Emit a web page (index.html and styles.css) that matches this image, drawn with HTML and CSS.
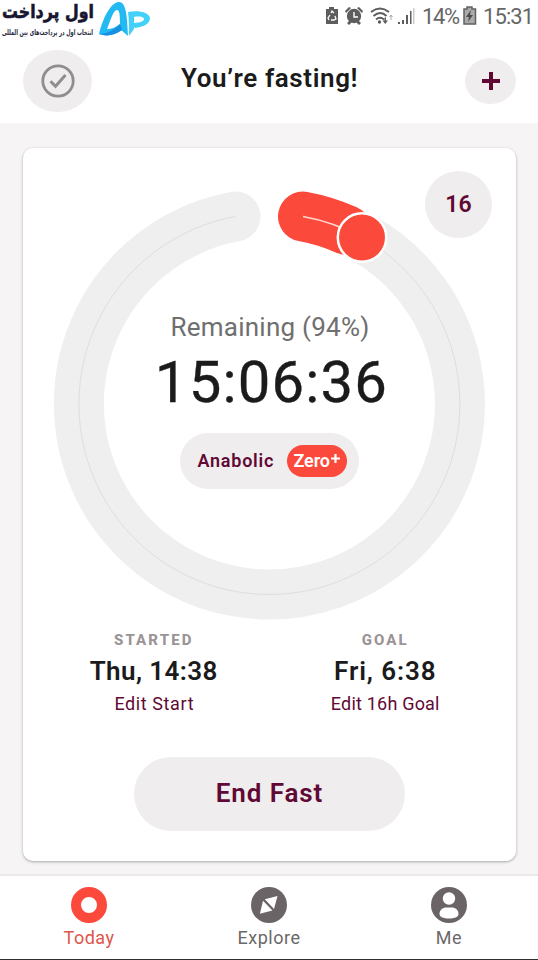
FILE: index.html
```html
<!DOCTYPE html>
<html lang="en">
<head>
<meta charset="utf-8">
<title>Fasting timer</title>
<link rel="stylesheet" href="styles.css">
</head>
<body>
<div class="app">
  <header class="header">
    <div class="statusbar">
      <svg class="brand" width="152" height="42" viewBox="0 0 152 42">
        <text class="brand-name" x="94" y="18" textLength="92" lengthAdjust="spacingAndGlyphs" direction="rtl">اول پرداخت</text>
        <text class="brand-tag" x="93" y="35" textLength="91" lengthAdjust="spacingAndGlyphs" direction="rtl">انتخاب اول در پرداخت‌های بین المللی</text>
        <path d="M99 34C103 18 110 4 118 2c8-1 9 12 10 34l-8-7c0-12 0-19-3-19-4 0-7 12-10 19 5 0 9-2 13-5l2 6c-7 5-15 7-23 4z" fill="#23b9f2"/>
        <path d="M99 34c8 0 15-4 21-10l2 6c-7 5-15 7-23 4z" fill="#198fe2"/>
        <path d="M128 12c12-2 21 1 22 6 0 6-7 9-15 10l-4-5c7 0 13-1 13-4 0-2-5-3-10-2v12l-5 7c0-9 0-17-1-24z" fill="#43d1fa"/>
      </svg>
      <div class="status-icons">
        <svg width="92" height="24" viewBox="0 0 92 24" fill="#5d5d5d">
          <path d="M4 2h5v2h4v15H1V4h3z"/>
          <path d="M4 15l-1-2 2-3M6 8l1-2 2 2M10 11l1 3-2 1H6" fill="none" stroke="#fff" stroke-width="1.3"/>
          <circle cx="29" cy="11" r="7.2"/>
          <path d="M20 6l4-4 2 1-5 5zM38 6l-4-4-2 1 5 5zM22 18l3-3 2 2-3 3zM36 18l-3-3-2 2 3 3z"/>
          <path d="M29 7v5h4" fill="none" stroke="#fff" stroke-width="1.4"/>
          <path d="M46 7q9-7 18 0M48.500 11q7-6 13 0M51 14.500q4-3.500 8 0" fill="none" stroke="#5d5d5d" stroke-width="1.900"/>
          <circle cx="54.500" cy="17" r="1.700"/>
          <path d="M57.500 15.500h2V12.500H61v3h2L60.200 19z"/>
          <path d="M66 10v5M64.500 12L66 10l1.500 2" fill="none" stroke="#aaa"/>
          <path d="M73 17h2v2h-2zM77 15h2v4h-2zM81 10h2v9h-2z"/>
          <path d="M85 6h1.500v13H85z"/>
          <path d="M88 3h1.500v16H88z" fill="#ccc"/>
        </svg>
        <span class="percent">14%</span>
        <svg class="battery" width="14" height="20" viewBox="0 0 14 20">
          <path d="M4 1h5v2h3.500v15H1V3h3z" fill="#aaa" stroke="#606060" stroke-width="1.500"/>
          <path d="M8 4l-5 7h3l-1 5 5-7H7z" fill="#4c4c4c"/>
        </svg>
        <span class="clock">15:31</span>
      </div>
    </div>
    <div class="titlebar">
      <div class="check-button">
        <svg width="34" height="34" viewBox="0 0 34 34" fill="none" stroke="#918c8e" stroke-width="2.800">
          <circle cx="17" cy="17" r="15.200"/><path d="M9.500 17.200l5 5L24.500 11" stroke-width="3"/>
        </svg>
      </div>
      <h1 class="title">You’re fasting!</h1>
      <div class="add-button">
        <svg width="18" height="18" viewBox="0 0 18 18"><path d="M9 0v18M0 9h18" stroke="#5f0934" stroke-width="4"/></svg>
      </div>
    </div>
  </header>

  <main class="main">
    <section class="card">
      <div class="dial">
        <svg class="ring" width="432" height="432" viewBox="0 0 432 432" fill="none">
          <path class="track" d="M308.500 49.200A190.500 190.500 0 1 1 182.500 28.500"/>
          <path class="guide" d="M308.500 49.200A190.500 190.500 0 1 1 182.500 28.500"/>
          <path class="progress" d="M250 28.500A190.500 190.500 0 0 1 293.500 42"/>
          <path class="progress-guide" d="M250 28.500A190.500 190.500 0 0 1 308.500 49.200"/>
          <circle cx="309" cy="49.500" r="24.200" fill="#fb4a3b" stroke="#fff" stroke-width="2.500"/>
        </svg>
        <div class="readout">
          <div class="remaining">Remaining (94%)</div>
          <div class="timer">15:06:36</div>
          <div class="zone"><span class="zone-name">Anabolic</span><span class="zero"><span class="zero-word">Zero</span><svg width="9" height="9" viewBox="0 0 9 9"><path d="M4.500 0v9M0 4.500h9" stroke="#fff" stroke-width="2.200"/></svg></span></div>
        </div>
      </div>
      <div class="goal-hours">16</div>
      <div class="times">
        <div class="time">
          <div class="label">STARTED</div>
          <div class="value">Thu, 14:38</div>
          <div class="edit edit-start">Edit Start</div>
        </div>
        <div class="time">
          <div class="label">GOAL</div>
          <div class="value goal-value">Fri, 6:38</div>
          <div class="edit">Edit 16h Goal</div>
        </div>
      </div>
      <div class="end-button">End Fast</div>
    </section>
  </main>

  <nav class="tabs">
    <div class="tab active">
      <svg width="36" height="36" viewBox="0 0 36 36"><circle cx="18" cy="18" r="13" fill="none" stroke="#fb4a3b" stroke-width="10"/></svg>
      <span>Today</span>
    </div>
    <div class="tab">
      <svg width="36" height="36" viewBox="0 0 36 36"><circle cx="18" cy="18" r="18" fill="#6b6466"/><path d="M26.500 9L13.800 12.200l9.200 9.800zM12 13.700L8.900 26.700l12.500-3.300z" fill="#fff"/></svg>
      <span>Explore</span>
    </div>
    <div class="tab">
      <svg width="36" height="36" viewBox="0 0 36 36"><circle cx="18" cy="18" r="18" fill="#6b6466"/><circle cx="18" cy="11.500" r="6.200" fill="#fff"/><path d="M8.500 27c0-4 3-6.500 7-6.500h5c4 0 7 2.500 7 6.500 0 3-4 4.500-9.500 4.500s-9.500-1.500-9.500-4.500z" fill="#fff"/></svg>
      <span>Me</span>
    </div>
  </nav>
</div>
</body>
</html>
```
FILE: styles.css
```css
* { box-sizing: border-box; }
body { margin: 0; font-family: Roboto, "Liberation Sans", sans-serif; background: #fff; }
.app { width: 538px; height: 960px; display: flex; flex-direction: column; overflow: hidden; border-bottom: 1px solid #303030; }
svg { display: block; flex: none; }

.header { height: 123px; background: #fff; }
.statusbar { height: 42px; display: flex; justify-content: space-between; }
.brand { overflow: visible; }
.brand-name { font: bold 19px "DejaVu Sans", sans-serif; fill: #17152f; stroke: #17152f; stroke-width: .6px; }
.brand-tag { font: bold 8px "DejaVu Sans", sans-serif; fill: #29273c; }
.status-icons { display: flex; align-items: flex-start; padding: 5px 7px 0 0; color: #666; font-size: 22px; line-height: 24px; }
.percent { width: 37px; margin-left: 5px; white-space: nowrap; letter-spacing: -1.4px; }
.battery { margin: 1px 6px 0 4px; }
.clock { width: 48px; letter-spacing: -.9px; }

.titlebar { height: 81px; display: flex; align-items: flex-start; justify-content: space-between; padding: 8px 22px 0 23px; }
.check-button { width: 69px; height: 62px; border-radius: 50%; background: #f0edee; display: flex; align-items: center; justify-content: center; }
.title { margin: 13px 0 0 17px; width: 178px; font-size: 26px; line-height: 30px; font-weight: 600; letter-spacing: .6px; white-space: nowrap; color: #1b1b1b; }
.add-button { width: 51px; height: 46px; margin: 8px 0 0 34px; border-radius: 50%; background: #f0edee; display: flex; align-items: center; justify-content: center; }

.main { height: 751px; background: #f6f4f5; padding: 25px 22px 0 23px; }
.card { position: relative; height: 713px; background: #fff; border-radius: 10px; box-shadow: 0 1px 3px rgba(0,0,0,.32); display: flex; flex-direction: column; align-items: center; padding-top: 40px; }
.dial { display: grid; width: 432px; height: 432px; margin-right: 1px; }
.ring, .readout { grid-area: 1 / 1; }
.track { stroke: #efefef; stroke-width: 50; stroke-linecap: round; }
.guide { stroke: #dedede; stroke-width: 1; }
.progress { stroke: #fb4a3b; stroke-width: 50; stroke-linecap: round; }
.progress-guide { stroke: #ffd9d4; stroke-width: 1.300; }
.readout { display: flex; flex-direction: column; align-items: center; padding-top: 123px; z-index: 1; }
.remaining { font-size: 26px; line-height: 32px; color: #6f6f6f; letter-spacing: .25px; padding-left: 2px; }
.timer { margin-top: 7px; font-size: 58px; line-height: 64px; letter-spacing: 1.2px; color: #1b1b1b; padding-left: 5px; -webkit-text-stroke: .35px #1b1b1b; }
.zone { margin-top: 19px; width: 179px; height: 56px; border-radius: 28px; background: #f0edee; display: flex; align-items: center; padding: 0 0 1px 18px; }
.zone-name { width: 77px; font-size: 18px; font-weight: 600; letter-spacing: .75px; color: #5f0934; }
.zero { margin-left: 12px; width: 60px; height: 32px; border-radius: 16px; background: #fb4a3b; color: #fff; display: flex; align-items: center; padding-left: 7px; }
.zero-word { width: 37px; font-size: 18px; font-weight: 600; letter-spacing: -.1px; }
.zero svg { margin-top: -5px; }
.goal-hours { position: absolute; top: 23px; right: 24px; width: 67px; height: 67px; border-radius: 50%; background: #f0edee; color: #5f0934; font-size: 23px; font-weight: 600; line-height: 67px; text-align: center; }

.times { display: flex; width: 463px; margin-top: 11px; }
.time { flex: 1; display: flex; flex-direction: column; align-items: center; }
.label { font-size: 15px; line-height: 18px; font-weight: 800; letter-spacing: 2.1px; color: #9a9496; }
.value { margin-top: 6px; font-size: 26px; line-height: 32px; font-weight: 600; letter-spacing: .4px; color: #1b1b1b; }
.goal-value { letter-spacing: .9px; }
.edit { margin-top: 6px; font-size: 18px; line-height: 22px; letter-spacing: .2px; color: #5f0934; }
.edit-start { letter-spacing: .6px; padding-left: 1px; }
.end-button { margin-top: 42px; width: 271px; height: 74px; border-radius: 37px; background: #f0edee; color: #5f0934; font-size: 26px; font-weight: 600; line-height: 73px; letter-spacing: .9px; text-align: center; }

.tabs { height: 85px; display: flex; background: #fff; border-top: 2px solid #eae8e9; margin: 0 -1px; }
.tab { flex: 1; display: flex; flex-direction: column; align-items: center; padding-top: 11px; font-size: 18px; line-height: 22px; letter-spacing: .5px; color: #6b6869; }
.tab span { margin-top: 4px; }
.tab.active { color: #df5549; }
```
